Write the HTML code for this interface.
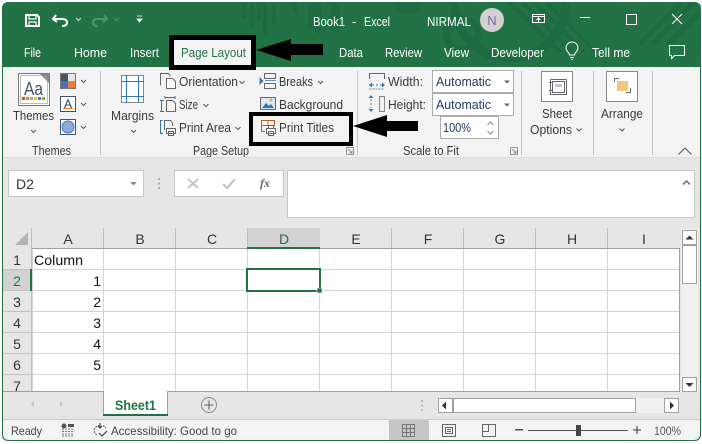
<!DOCTYPE html>
<html><head><meta charset="utf-8"><style>
html,body{margin:0;padding:0;background:#fff;width:702px;height:444px;overflow:hidden}
svg{display:block}
text{font-family:"Liberation Sans",sans-serif;font-size:13px;fill:#3a3a3a}
.w{fill:#fff}
.c{text-anchor:middle;font-size:14px;fill:#333}
.r{text-anchor:end;font-size:14px;fill:#111}
.ch{fill:none;stroke:#555;stroke-width:1}
.s{fill:none;stroke:#666;stroke-width:1}
.b{fill:none;stroke:#2e75b6;stroke-width:1}
</style></head><body>
<svg width="702" height="444" viewBox="0 0 702 444" xmlns="http://www.w3.org/2000/svg">
<defs><clipPath id="win"><path d="M9 2H694Q701 2 701 9V434Q701 441 694 441H9Q2 441 2 434V9Q2 2 9 2Z"/></clipPath></defs>
<rect width="702" height="444" fill="#fff"/>
<g clip-path="url(#win)">
<rect x="2" y="2" width="699" height="439" fill="#217346"/>
<!-- decoration -->
<g fill="#1f6b41">
<rect x="242" y="2" width="5" height="16"/><rect x="250" y="2" width="4" height="24"/><rect x="257" y="2" width="4" height="18"/><rect x="263" y="2" width="4" height="33"/><rect x="272" y="2" width="4" height="21"/>
<path d="M290 2h7v14z"/><path d="M308 2h13v33l-13-8z"/><rect x="331" y="2" width="9" height="30"/>
<circle cx="408" cy="2" r="13"/>
</g>
<g fill="none" stroke="#1f6b41">
<circle cx="462" cy="34" r="16" stroke-width="7"/>
<circle cx="510" cy="2" r="56" stroke-width="9"/>
<path d="M510 2L560 52M522 2L572 52M534 2L584 52M546 2L596 52" stroke-width="4"/>
<path d="M640 44L682 2M652 44L694 2M668 44L706 6" stroke-width="5"/>
</g>
<!-- QAT -->
<g fill="none" stroke="#fff" stroke-width="2">
<path d="M26 15H37L39 17V26H26Z"/><path d="M29 15V19H36V15" stroke-width="1.2"/><path d="M29 26V22H36V26" stroke-width="1.2"/>
<path d="M56 15L53 19L57 22M54 19H62Q67 19 67 22.500Q67 26 62 26"/>
</g>
<path style="fill:none;stroke:#ddd" d="M76 18l2.500 2.500L81 18"/>
<g fill="none" stroke="#4f9270" stroke-width="2"><path d="M104 15L107 19L103 22M106 19H98Q93 19 93 22.500Q93 26 98 26"/></g>
<path style="fill:none;stroke:#4f9270" d="M114 18l2.500 2.500L119 18"/>
<path d="M137 16h5M137 19h5l-2.500 3z" stroke="#fff" fill="#fff" stroke-width=".8"/>
<!-- title -->
<text class="w" x="313" y="26" textLength="32" lengthAdjust="spacingAndGlyphs">Book1</text>
<text class="w" x="352" y="26">-</text>
<text class="w" x="364" y="26" textLength="26" lengthAdjust="spacingAndGlyphs">Excel</text>
<text class="w" x="427" y="26" textLength="44" lengthAdjust="spacingAndGlyphs">NIRMAL</text>
<circle cx="492" cy="20" r="12" fill="#d2d0d2"/>
<text x="492" y="25" text-anchor="middle" style="fill:#77708c;font-size:13px">N</text>
<g fill="none" stroke="#fff">
<rect x="532.500" y="14.500" width="12" height="8"/><path d="M532 16.500H545M538.500 22V18M536.500 20l2-2 2 2"/>
</g>
<rect x="580" y="17" width="10" height="1" fill="#fff"/>
<rect x="626.500" y="14.500" width="10" height="10" fill="none" stroke="#fff"/>
<path d="M672 14L682 24M682 14L672 24" stroke="#fff" fill="none"/>
<!-- tabs -->
<text class="w" x="24" y="57" textLength="17" lengthAdjust="spacingAndGlyphs">File</text>
<text class="w" x="74" y="57" textLength="33" lengthAdjust="spacingAndGlyphs">Home</text>
<text class="w" x="130" y="57" textLength="29" lengthAdjust="spacingAndGlyphs">Insert</text>
<text class="w" x="339" y="57" textLength="24" lengthAdjust="spacingAndGlyphs">Data</text>
<text class="w" x="385" y="57" textLength="37" lengthAdjust="spacingAndGlyphs">Review</text>
<text class="w" x="444" y="57" textLength="25" lengthAdjust="spacingAndGlyphs">View</text>
<text class="w" x="491" y="57" textLength="53" lengthAdjust="spacingAndGlyphs">Developer</text>
<text class="w" x="592" y="57" textLength="38" lengthAdjust="spacingAndGlyphs">Tell me</text>
<g fill="none" stroke="#fff"><path d="M569.500 55C569 52 566 51 566 48A5.800 5.800 0 0 1 578 48C578 51 575 52 574.500 55ZM570 57.500H574M571 59.500H573"/>
<path d="M669.500 45.500H684.500V55.500H674.500L671.500 58.500V55.500H669.500Z"/></g>
<!-- ribbon -->
<rect x="3" y="67" width="697" height="91" fill="#f3f3f3"/>
<rect x="3" y="158" width="697" height="262" fill="#e6e6e6"/>
<rect x="3" y="420" width="697" height="21" fill="#f3f3f3"/>
<g fill="#c6c6c6">
<rect x="100" y="71" width="1" height="84"/><rect x="357" y="71" width="1" height="84"/><rect x="521" y="71" width="1" height="84"/><rect x="593" y="71" width="1" height="84"/><rect x="652" y="71" width="1" height="84"/>
</g>
<!-- Page layout tab box -->
<rect x="171.500" y="37.500" width="82" height="30" fill="#f3f3f3" stroke="#000" stroke-width="5"/>
<text x="181" y="57" textLength="65" lengthAdjust="spacingAndGlyphs" style="fill:#217346">Page Layout</text>
<path d="M256 50L291 39V44H323V55H291V61Z" fill="#000"/>
<!-- Themes -->
<rect x="18.500" y="73.500" width="31" height="32" fill="#fff" stroke="#777"/>
<rect x="20.500" y="75.500" width="27" height="28" fill="none" stroke="#bbb"/>
<path d="M40 74H49V83Z" fill="#8c8c8c"/>
<text x="24" y="95" textLength="19" lengthAdjust="spacingAndGlyphs" style="font-size:18px;fill:#44546a">Aa</text>
<g><rect x="22" y="97" width="3" height="3" fill="#c55a11"/><rect x="26" y="97" width="3" height="3" fill="#ed7d31"/><rect x="30" y="97" width="3" height="3" fill="#a5a5a5"/><rect x="34" y="97" width="3" height="3" fill="#ffc000"/><rect x="38" y="97" width="3" height="3" fill="#4472c4"/><rect x="42" y="97" width="3" height="3" fill="#70ad47"/></g>
<text x="13" y="120" textLength="41" lengthAdjust="spacingAndGlyphs">Themes</text>
<path class="ch" d="M31 130l2.500 2.500L36 130"/>
<text x="32" y="155" textLength="39" lengthAdjust="spacingAndGlyphs">Themes</text>
<rect x="60.500" y="73.500" width="15" height="15" fill="#fff" stroke="#777"/>
<rect x="61" y="74" width="7" height="7" fill="#44546a"/><rect x="68" y="74" width="7" height="7" fill="#e7e6e6"/><rect x="61" y="81" width="7" height="7" fill="#4472c4"/><rect x="68" y="81" width="7" height="7" fill="#ed7d31"/>
<path class="ch" d="M81 80l2.500 2.500L86 80"/>
<rect x="60.500" y="96.500" width="15" height="15" fill="#fff" stroke="#44546a"/>
<text x="64" y="108" style="font-size:12px;fill:#1f3864">A</text><rect x="63" y="108" width="10" height="1" fill="#ed7d31"/>
<path class="ch" d="M81 103l2.500 2.500L86 103"/>
<rect x="60.500" y="119.500" width="15" height="15" fill="#fff" stroke="#44546a"/>
<circle cx="68" cy="127" r="6" fill="#8faadc" stroke="#4472c4"/>
<path class="ch" d="M81 126l2.500 2.500L86 126"/>
<!-- Margins -->
<rect x="121.500" y="75.500" width="22" height="27" fill="#fff" stroke="#888"/>
<path class="b" d="M126.500 75V103M138.500 75V103M121 81.500H144M121 96.500H144"/>
<text x="111" y="120" textLength="43" lengthAdjust="spacingAndGlyphs">Margins</text>
<path class="ch" d="M131 130l2.500 2.500L136 130"/>
<!-- Page setup col 1 -->
<path class="s" d="M160.500 85.500V73.500H168.500L170.500 76.500"/><path class="s" d="M166.500 88.500V78.500H172.500L175.500 81.500V88.500Z" style="fill:#fff"/>
<text x="179" y="86" textLength="59" lengthAdjust="spacingAndGlyphs">Orientation</text>
<path class="ch" d="M239.500 81l2.500 2.500L244.500 81"/>
<path class="b" d="M161.500 100.500V111.500M160 100.500H164M160 111.500H164M165 97.500H175M165 96V99M175 96V99"/>
<path class="s" d="M166.500 111.500V100.500H172.500L175.500 103.500V111.500Z"/>
<text x="179" y="109" textLength="19" lengthAdjust="spacingAndGlyphs">Size</text>
<path class="ch" d="M203.500 104l2.500 2.500L208.500 104"/>
<path class="b" d="M162.500 120.500H160.500V133.500H163"/>
<path class="s" d="M164.500 130V120.500H170.500L172.500 123V126M166.500 128.500H175.500V133.500H166.500ZM168.500 131.500H173.500V135.500H168.500Z"/>
<text x="179" y="132" textLength="52" lengthAdjust="spacingAndGlyphs">Print Area</text>
<path class="ch" d="M235.500 127l2.500 2.500L240.500 127"/>
<!-- col 2 -->
<path class="s" d="M264.500 73.500H275.500V78.500H264.500ZM264.500 83.500H275.500V88.500H264.500Z"/>
<path d="M260 78l3 3-3 3zM265 80.500h11" fill="#2e75b6" stroke="#2e75b6" stroke-width=".8"/>
<text x="279" y="86" textLength="34" lengthAdjust="spacingAndGlyphs">Breaks</text>
<path class="ch" d="M318 81l2.500 2.500L323 81"/>
<rect x="260.500" y="97.500" width="15" height="12" fill="#dbe9f6" stroke="#666"/>
<path d="M262 108l4-5 3 3 2-2 3 4z" fill="#2e75b6"/><circle cx="271" cy="100" r="1.500" fill="#f4a83c"/>
<text x="279" y="109" textLength="64" lengthAdjust="spacingAndGlyphs">Background</text>
<!-- Print Titles box -->
<rect x="251" y="114" width="100" height="30" fill="#f3f3f3" stroke="#000" stroke-width="4"/>
<rect x="261.500" y="120.500" width="13" height="5" fill="#fff" stroke="#c55a11"/>
<path d="M261.500 125.500V131.500H265M268 120V125" stroke="#c55a11" fill="none"/>
<path class="s" style="fill:#fff" d="M266.500 128.500H275.500V133.500H266.500ZM268.500 131.500H273.500V135.500H268.500ZM268.500 128V125.500H273.500V128"/>
<text x="279" y="132" textLength="55" lengthAdjust="spacingAndGlyphs">Print Titles</text>
<path d="M353 126L387 115V121H418V131H387V137Z" fill="#000"/>
<text x="193" y="155" textLength="56" lengthAdjust="spacingAndGlyphs">Page Setup</text>
<path d="M346.500 147.500H353.500V154.500M346.500 147.500V154.500H353.500M348 149l4 4M352 150.500V153H349.500" fill="none" stroke="#777" stroke-width=".8"/>
<!-- Scale -->
<path class="s" d="M369.500 79V73.500H384.500V79"/>
<path d="M369 85l3-2.500v5zM385 85l-3-2.500v5z" fill="#2e75b6"/><path d="M372 85h2M376 85h2M380 85h2" stroke="#2e75b6"/><path d="M369.500 89h15" stroke="#888" stroke-dasharray="2 1"/>
<text x="388" y="86" textLength="35" lengthAdjust="spacingAndGlyphs">Width:</text>
<rect x="379.500" y="96.500" width="5" height="15" fill="none" stroke="#888"/>
<path d="M371 95l2.500 3h-5zM371 112l2.500-3h-5z" fill="#2e75b6"/><path d="M371 99v2M371 103v2M371 107v1" stroke="#2e75b6"/>
<text x="388" y="109" textLength="38" lengthAdjust="spacingAndGlyphs">Height:</text>
<rect x="432.500" y="70.500" width="81" height="22" fill="#fff" stroke="#ababab"/>
<rect x="432.500" y="93.500" width="81" height="22" fill="#fff" stroke="#ababab"/>
<text x="436" y="86" textLength="55" lengthAdjust="spacingAndGlyphs" style="fill:#1f3864">Automatic</text>
<text x="436" y="109" textLength="55" lengthAdjust="spacingAndGlyphs" style="fill:#1f3864">Automatic</text>
<path d="M504 80.500h6l-3 3zM504 103.500h6l-3 3z" fill="#666"/>
<rect x="440.500" y="116.500" width="58" height="22" fill="#fff" stroke="#ababab"/>
<text x="443" y="132" textLength="28" lengthAdjust="spacingAndGlyphs" style="fill:#1f3864">100%</text>
<path class="ch" d="M487.500 125l3-3 3 3M487.500 131l3 3 3-3" style="stroke:#888"/>
<text x="403" y="155" textLength="56" lengthAdjust="spacingAndGlyphs">Scale to Fit</text>
<path d="M510.500 147.500H517.500V154.500M510.500 147.500V154.500H517.500M512 149l4 4M516 150.500V153H513.500" fill="none" stroke="#777" stroke-width=".8"/>
<!-- Sheet Options -->
<rect x="541.500" y="71.500" width="31" height="30" fill="#fff" stroke="#888"/>
<path class="s" d="M552.500 81.500H564.500V92.500H552.500ZM550.500 79.500H566.500M550.500 79.500V94.500H566.500V79.500M549 82.500H552M549 90.500H552M550.500 82.500V90.500"/>
<rect x="555" y="84" width="7" height="3" fill="#b4c7e7"/>
<text x="542" y="118" textLength="30" lengthAdjust="spacingAndGlyphs">Sheet</text>
<text x="530" y="134" textLength="42" lengthAdjust="spacingAndGlyphs">Options</text>
<path class="ch" d="M576.500 128.500l2.500 2.500L581.500 128.500"/>
<!-- Arrange -->
<rect x="606.500" y="71.500" width="31" height="30" fill="#fff" stroke="#888"/>
<rect x="617" y="81" width="11" height="10" fill="#f0c77d"/>
<path class="s" d="M614.500 82V78.500H619M630.500 88V92.500H626"/>
<text x="601" y="118" textLength="42" lengthAdjust="spacingAndGlyphs">Arrange</text>
<path class="ch" d="M619.500 128.500l2.500 2.500L624.500 128.500"/>
<path d="M678.500 154.500L685 148L691.500 154.500" fill="none" stroke="#555"/>
<rect x="3" y="157" width="697" height="1" fill="#dcdcdc"/>
<!-- Formula bar -->
<rect x="8.500" y="170.500" width="135" height="26" fill="#fff" stroke="#c6c6c6"/>
<text x="16" y="189" style="font-size:14px;fill:#333">D2</text>
<path d="M130 182h7l-3.500 3.500z" fill="#888"/>
<path d="M159 178v2M159 182.500v2M159 187v2" stroke="#aaa" stroke-width="2"/>
<rect x="174.500" y="170.500" width="109" height="26" fill="#fff" stroke="#c6c6c6"/>
<path d="M188 179L198 188M198 179L188 188" stroke="#c0c0c0" stroke-width="1.800" fill="none"/>
<path d="M223 184L227 188L235 179" stroke="#c0c0c0" stroke-width="2" fill="none"/>
<text x="260" y="187" style="font-family:'Liberation Serif',serif;font-style:italic;font-weight:bold;font-size:12px;fill:#666">fx</text>
<rect x="287.500" y="170.500" width="407" height="47" fill="#fff" stroke="#c6c6c6"/>
<path d="M683 184.500L686.500 181L690 184.500" fill="none" stroke="#777" stroke-width="1.600"/>
<!-- Grid -->
<rect x="32" y="249" width="647" height="142" fill="#fff"/>
<g stroke="#d4d4d4" fill="none">
<path d="M32.500 249V391M103.500 249V391M175.500 249V391M247.500 249V391M319.500 249V391M391.500 249V391M463.500 249V391M535.500 249V391M607.500 249V391"/>
<path d="M32 269.500H679M32 290.500H679M32 311.500H679M32 332.500H679M32 353.500H679M32 374.500H679"/>
</g>
<g><path d="M3 269.500H32M3 290.500H32M3 311.500H32M3 332.500H32M3 353.500H32M3 374.500H32M31.500 248V391" fill="none" stroke="#c0c0c0"/>
<path d="M103.500 228V248M175.500 228V248M247.500 228V248M319.500 228V248M391.500 228V248M463.500 228V248M535.500 228V248M607.500 228V248M31.500 228V248" fill="none" stroke="#bdbdbd"/></g>
<rect x="32" y="248" width="647" height="1" fill="#a0a0a0"/>
<rect x="679" y="248" width="1" height="143" fill="#a0a0a0"/>
<path d="M28 232V245H15Z" fill="#b4b4b4"/>
<rect x="248" y="228" width="72" height="20" fill="#d2d2d2"/>
<rect x="247" y="247" width="73" height="2" fill="#217346"/>
<rect x="3" y="270" width="27" height="20" fill="#d2d2d2"/>
<rect x="30" y="269" width="2" height="22" fill="#217346"/>
<text class="c" x="68" y="244">A</text><text class="c" x="140" y="244">B</text><text class="c" x="212" y="244">C</text><text class="c" x="284" y="244" style="fill:#217346">D</text><text class="c" x="356" y="244">E</text><text class="c" x="428" y="244">F</text><text class="c" x="500" y="244">G</text><text class="c" x="572" y="244">H</text><text class="c" x="644" y="244">I</text>
<text class="c" x="17" y="265">1</text><text class="c" x="17" y="286" style="fill:#217346">2</text><text class="c" x="17" y="307">3</text><text class="c" x="17" y="328">4</text><text class="c" x="17" y="349">5</text><text class="c" x="17" y="370">6</text><text class="c" x="17" y="391">7</text>
<text x="34" y="265" textLength="49" lengthAdjust="spacingAndGlyphs" style="font-size:14px;fill:#111">Column</text>
<text class="r" x="101" y="286">1</text><text class="r" x="101" y="307">2</text><text class="r" x="101" y="328">3</text><text class="r" x="101" y="349">4</text><text class="r" x="101" y="370">5</text>
<rect x="3" y="391" width="697" height="28" fill="#e6e6e6"/>
<rect x="3" y="391" width="677" height="1" fill="#a0a0a0"/>
<rect x="247" y="269" width="73" height="22" fill="none" stroke="#217346" stroke-width="2"/>
<rect x="317" y="288" width="5" height="5" fill="#217346" stroke="#fff" stroke-width=".6"/>
<!-- V scroll -->
<rect x="681" y="229" width="17" height="163" fill="#f0f0f0"/>
<rect x="682.500" y="230.500" width="14" height="14" fill="#fff" stroke="#a0a0a0"/>
<path d="M685.500 239.500h8l-4-4z" fill="#333"/>
<rect x="682.500" y="245.500" width="14" height="38" fill="#fff" stroke="#a0a0a0"/>
<rect x="682.500" y="377.500" width="14" height="14" fill="#fff" stroke="#a0a0a0"/>
<path d="M685.500 383h8l-4 4z" fill="#333"/>
<!-- Sheet tabs -->
<path d="M34 401v6l-3-3zM60 401v6l3-3z" fill="#c4c4c4"/>
<rect x="103" y="391" width="65" height="24" fill="#fff"/>
<path d="M103.500 391V415M167.500 391V415" stroke="#a0a0a0" fill="none"/>
<rect x="103" y="414" width="65" height="2" fill="#217346"/>
<text x="115" y="410" textLength="41" lengthAdjust="spacingAndGlyphs" style="font-size:14px;font-weight:bold;fill:#217346">Sheet1</text>
<circle cx="209" cy="405" r="7.500" fill="none" stroke="#888"/>
<path d="M204.500 405h9M209 400.500v9" stroke="#777" stroke-width="1.300"/>
<path d="M422 400v2M422 404.500v2M422 409v2" stroke="#bbb" stroke-width="2"/>
<!-- H scroll -->
<rect x="438" y="398" width="241" height="15" fill="#f0f0f0"/>
<rect x="438.500" y="398.500" width="14" height="14" fill="#fff" stroke="#a0a0a0"/>
<path d="M446 401.500v8l-4-4z" fill="#333"/>
<rect x="453.500" y="398.500" width="182" height="14" fill="#fff" stroke="#a0a0a0"/>
<rect x="664.500" y="398.500" width="14" height="14" fill="#fff" stroke="#a0a0a0"/>
<path d="M670 401.500v8l4-4z" fill="#333"/>
<rect x="3" y="419" width="697" height="1" fill="#c6c6c6"/>
<!-- Status -->
<text x="11" y="435" textLength="31" lengthAdjust="spacingAndGlyphs" style="font-size:12px;fill:#444">Ready</text>
<circle cx="64" cy="426" r="2.500" fill="#555"/><rect x="68" y="424" width="6" height="3" fill="#555"/>
<path d="M62 429h12M62 431.500h12M62 434h12M62 436h12" stroke="#777" stroke-dasharray="2 1" fill="none"/>
<path d="M100 425.500A6 6 0 0 0 94 430A6 6 0 0 0 97 435M103 425.500L106 428" fill="none" stroke="#555" stroke-dasharray="2 1"/>
<path d="M100 423v5M98 426l2 2 2-2M99 433l3 3 5-5" fill="none" stroke="#444" stroke-width="1.200"/>
<text x="111" y="435" textLength="126" lengthAdjust="spacingAndGlyphs" style="font-size:12px;fill:#444">Accessibility: Good to go</text>
<rect x="389" y="420" width="40" height="21" fill="#c6c6c6"/>
<path d="M402.500 424.500H414.500V436.500H402.500ZM406.500 424.500V436.500M410.500 424.500V436.500M402.500 428.500H414.500M402.500 432.500H414.500" fill="none" stroke="#777"/>
<path d="M442.500 424.500H455.500V436.500H442.500ZM445.500 427.500H452.500V433.500H445.500ZM447 429.500H451M447 431.500H451" fill="none" stroke="#666"/>
<path d="M482.500 424.500H495.500V436.500H482.500ZM482.500 431.500H488.500V424.500" fill="none" stroke="#666"/>
<rect x="515" y="429" width="8" height="1.500" fill="#555"/>
<rect x="528" y="430" width="100" height="1" fill="#555"/>
<rect x="576" y="425" width="5" height="11" fill="#444"/>
<path d="M633 430h8M637 426v8" stroke="#555" stroke-width="1.300"/>
<text x="654" y="435" textLength="27" lengthAdjust="spacingAndGlyphs" style="font-size:12px;fill:#555">100%</text>
</g>
<path d="M9 2.500H694Q700.500 2.500 700.500 9V434Q700.500 440.500 694 440.500H9Q2.500 440.500 2.500 434V9Q2.500 2.500 9 2.500Z" fill="none" stroke="#217346"/>
</svg>
</body></html>
